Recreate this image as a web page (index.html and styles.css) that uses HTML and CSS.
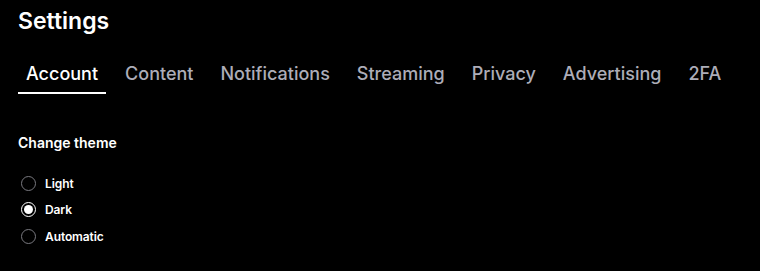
FILE: index.html
```html
<!DOCTYPE html>
<html>
<head>
<meta charset="utf-8">
<link rel="stylesheet" href="styles.css">
</head>
<body>
<div class="page">
  <h1 class="title">Settings</h1>
  <nav class="tabs">
    <a class="tab active">Account</a>
    <a class="tab">Content</a>
    <a class="tab">Notifications</a>
    <a class="tab">Streaming</a>
    <a class="tab">Privacy</a>
    <a class="tab">Advertising</a>
    <a class="tab">2FA</a>
  </nav>
  <section class="section">
    <h2 class="section-title">Change theme</h2>
    <div class="options">
      <label class="option"><span class="radio"></span><span class="label">Light</span></label>
      <label class="option"><span class="radio checked"></span><span class="label">Dark</span></label>
      <label class="option"><span class="radio"></span><span class="label">Automatic</span></label>
    </div>
  </section>
</div>
</body>
</html>
```
FILE: styles.css
```css
html, body {
  margin: 0;
  padding: 0;
  background: #000;
}
body {
  font-family: Inter, "Liberation Sans", sans-serif;
  color: #efeff1;
  width: 760px;
  height: 271px;
  overflow: hidden;
}
.page {
  padding: 6px 18px 0 18px;
}
.title {
  margin: 0;
  font-size: 23px;
  font-weight: 600;
  line-height: 30px;
  color: #fff;
}
.tabs {
  display: flex;
  gap: 11px;
  margin-top: 26px;
}
.tab {
  padding: 0 8px 6px 8px;
  font-size: 18px;
  font-weight: 500;
  line-height: 24px;
  color: #adadb8;
  border-bottom: 2px solid transparent;
}
.tab.active {
  color: #fff;
  border-bottom-color: #fff;
}
.section {
  margin-top: 39px;
}
.section-title {
  margin: 0;
  font-size: 14px;
  font-weight: 600;
  line-height: 20px;
  color: #fff;
}
.options {
  margin-top: 20px;
  display: flex;
  flex-direction: column;
  gap: 6.5px;
}
.option {
  display: flex;
  align-items: center;
  height: 20px;
  gap: 9px;
}
.radio {
  box-sizing: border-box;
  width: 15px;
  height: 15px;
  margin-left: 3px;
  border-radius: 50%;
  border: 1px solid #7a7a80;
  position: relative;
}
.radio.checked {
  border: 1.5px solid #fff;
}
.radio.checked::after {
  content: "";
  position: absolute;
  left: 1.5px;
  top: 1.5px;
  width: 9px;
  height: 9px;
  border-radius: 50%;
  background: #fff;
}
.label {
  font-size: 12px;
  font-weight: 600;
  letter-spacing: -0.1px;
  color: #fff;
}
```
